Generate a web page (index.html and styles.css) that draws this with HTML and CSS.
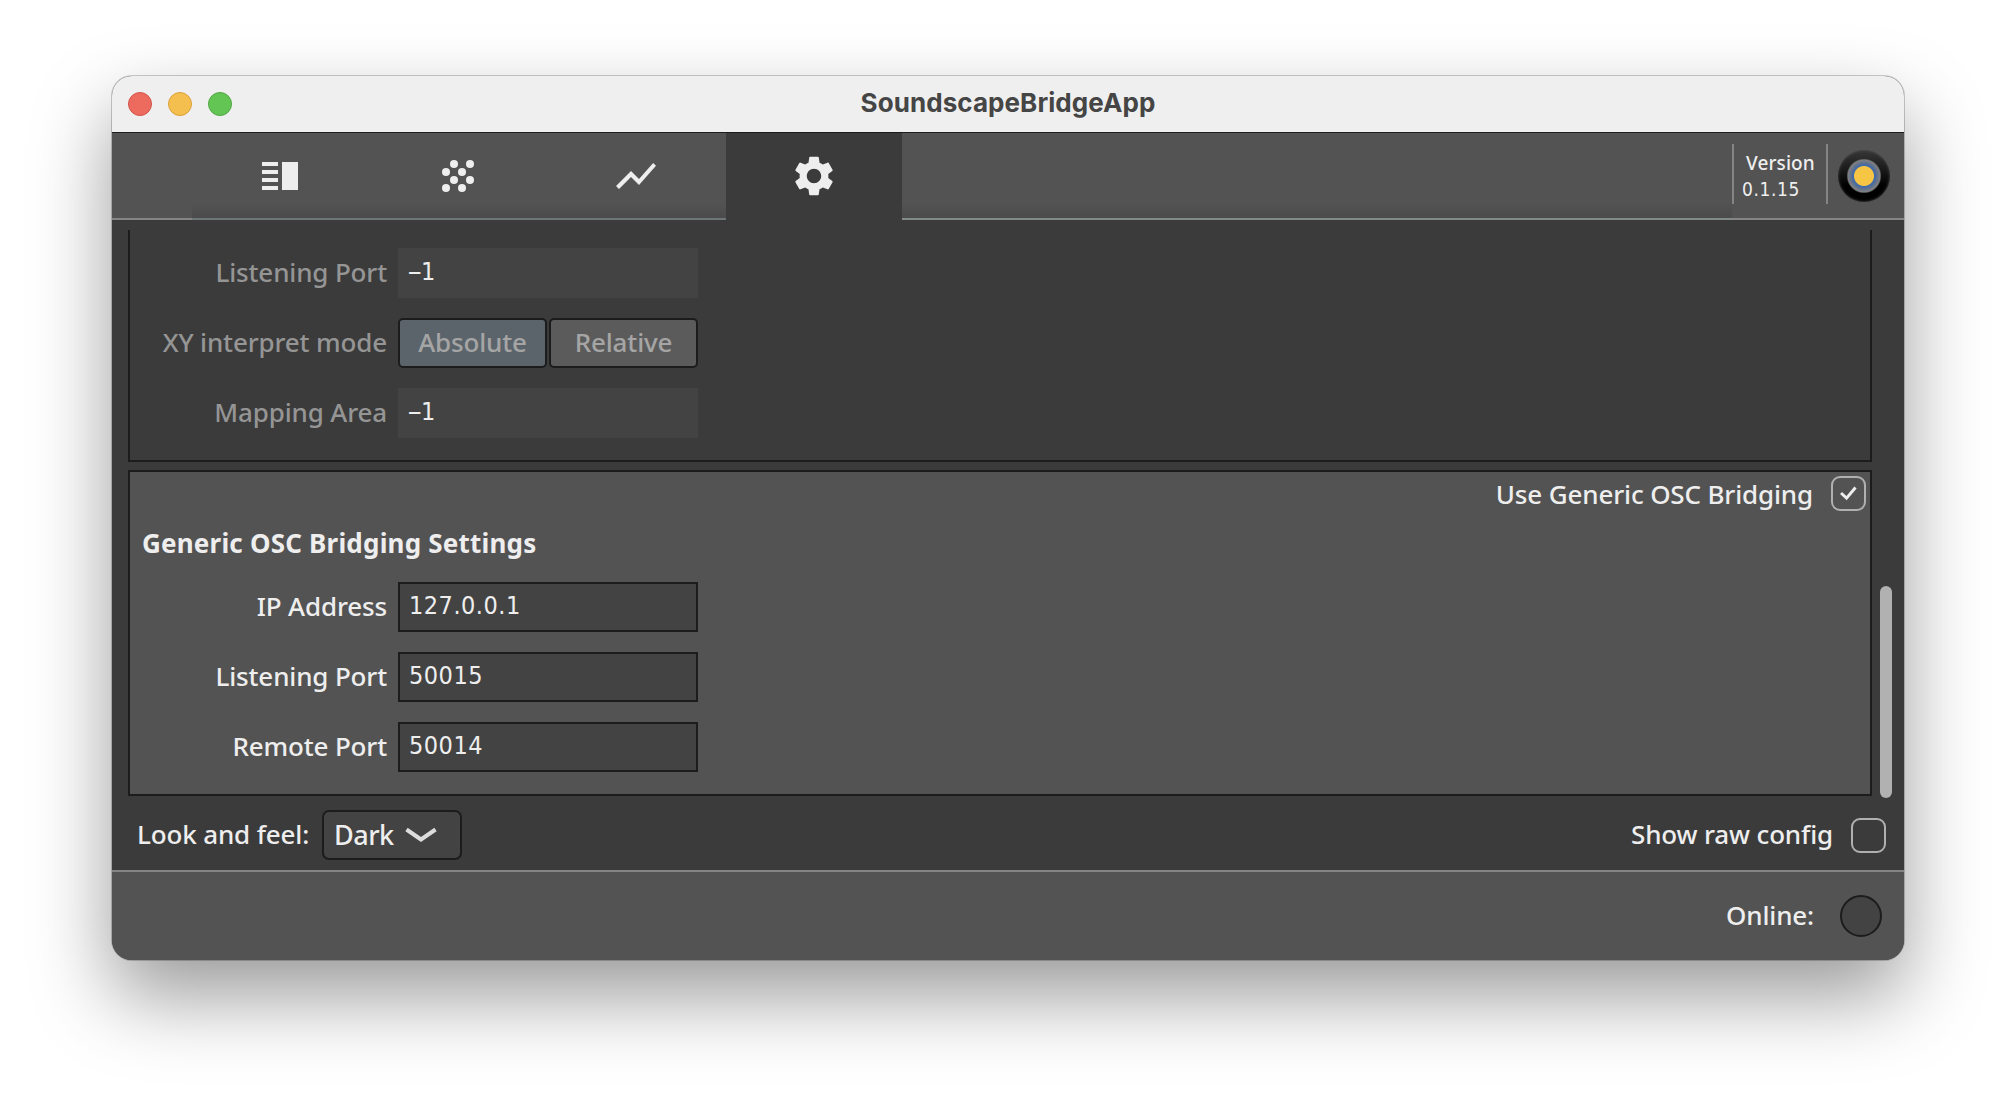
FILE: index.html
```html
<!DOCTYPE html>
<html lang="en">
<head>
<meta charset="utf-8">
<title>SoundscapeBridgeApp</title>
<link rel="stylesheet" href="styles.css">
</head>
<body>
<div class="window">
  <header class="titlebar">
    <div class="lights"><i class="light red"></i><i class="light amber"></i><i class="light green"></i></div>
    <h1 class="title">SoundscapeBridgeApp</h1>
  </header>

  <nav class="toolbar">
    <div class="lead"></div>
    <div class="tab">
      <svg class="icon" viewBox="0 0 48 48"><path d="M6 10h16v4H6zM6 18h16v4H6zM6 26h16v4H6zM6 34h16v4H6zM26 10h16v28H26z"/></svg>
    </div>
    <div class="tab">
      <svg class="icon" viewBox="0 0 48 48"><g><circle cx="20" cy="12" r="4"/><circle cx="36" cy="12" r="4"/><circle cx="12" cy="20" r="4"/><circle cx="28" cy="20" r="4"/><circle cx="20" cy="28" r="4"/><circle cx="36" cy="28" r="4"/><circle cx="12" cy="36" r="4"/><circle cx="28" cy="36" r="4"/></g></svg>
    </div>
    <div class="tab">
      <svg class="icon" viewBox="0 0 24 24"><path d="M3.5 18.49l6-6.01 4 4L22 6.92l-1.41-1.41-7.09 7.97-4-4L2 16.99z"/></svg>
    </div>
    <div class="tab active">
      <svg class="icon" viewBox="0 0 24 24"><path d="M19.14 12.94c.04-.3.06-.61.06-.94 0-.32-.02-.64-.07-.94l2.03-1.58c.18-.14.23-.41.12-.61l-1.92-3.32c-.12-.22-.37-.29-.59-.22l-2.39.96c-.5-.38-1.03-.7-1.62-.94l-.36-2.54c-.04-.24-.24-.41-.48-.41h-3.84c-.24 0-.43.17-.47.41l-.36 2.54c-.59.24-1.13.57-1.62.94l-2.39-.96c-.22-.08-.47 0-.59.22L2.74 8.87c-.12.21-.08.47.12.61l2.03 1.58c-.05.3-.09.63-.09.94s.02.64.07.94l-2.03 1.58c-.18.14-.23.41-.12.61l1.92 3.32c.12.22.37.29.59.22l2.39-.96c.5.38 1.03.7 1.62.94l.36 2.54c.05.24.24.41.48.41h3.84c.24 0 .44-.17.47-.41l.36-2.54c.59-.24 1.13-.56 1.62-.94l2.39.96c.22.08.47 0 .59-.22l1.92-3.32c.12-.22.07-.47-.12-.61l-2.01-1.58zM12 15.6c-1.98 0-3.6-1.62-3.6-3.6s1.62-3.6 3.6-3.6 3.6 1.62 3.6 3.6-1.62 3.6-3.6 3.6z"/></svg>
    </div>
    <div class="filler"></div>
    <div class="about">
      <div class="version"><span class="version-name">Version</span><span class="version-number">0.1.15</span></div>
      <div class="logo"></div>
    </div>
  </nav>

  <main class="content">
    <div class="viewport">
      <div class="sections">
        <section class="panel disabled">
          <div class="row"><label class="label">Listening Port</label><div class="field"><span class="dash">-</span>1</div></div>
          <div class="row"><label class="label">XY interpret mode</label><div class="toggle"><span class="option selected">Absolute</span><span class="option">Relative</span></div></div>
          <div class="row"><label class="label">Mapping Area</label><div class="field"><span class="dash">-</span>1</div></div>
        </section>
        <section class="panel enabled">
          <div class="use"><span class="use-text">Use Generic OSC Bridging</span><span class="check"><svg class="tick" viewBox="0 0 36 36"><path d="M10.3 17.5l5.7 5.3 9.2-11"/></svg></span></div>
          <h2 class="heading">Generic OSC Bridging Settings</h2>
          <div class="rows">
            <div class="row"><label class="label">IP Address</label><div class="field">127.0.0.1</div></div>
            <div class="row"><label class="label">Listening Port</label><div class="field">50015</div></div>
            <div class="row"><label class="label">Remote Port</label><div class="field">50014</div></div>
          </div>
        </section>
      </div>
      <div class="track"><div class="thumb"></div></div>
    </div>
    <div class="options">
      <span class="look">Look and feel:</span>
      <div class="select"><span class="select-text">Dark</span><svg class="chevron" viewBox="0 0 32 16"><path d="M1.5 2.5L16 12.5L30.5 2.5"/></svg></div>
      <span class="raw">Show raw config</span>
      <span class="check"></span>
    </div>
  </main>

  <footer class="status"><span class="online">Online:</span><span class="lamp"></span></footer>
</div>
</body>
</html>
```
FILE: styles.css
```css
* { box-sizing: border-box; }
body {
  margin: 0;
  height: 1108px;
  padding: 76px 112px;
  background: #fff;
  color: #eee;
  font: 500 26px/36px "Noto Sans", sans-serif;
  letter-spacing: -.15px;
  overflow: hidden;
  white-space: nowrap;
}
.window {
  width: 1792px;
  height: 884px;
  display: flex;
  flex-direction: column;
  overflow: hidden;
  border-radius: 20px;
  background: #3b3b3b;
  box-shadow: 0 0 0 1px rgba(0,0,0,.2), 0 36px 80px rgba(0,0,0,.4);
}
.titlebar {
  height: 56px;
  flex: none;
  display: grid;
  grid-template-columns: 1fr auto 1fr;
  align-items: center;
  padding: 0 16px;
  background: #efefef;
}
.lights { display: flex; gap: 16px; }
.light { width: 24px; height: 24px; border-radius: 50%; border: 1px solid; }
.red { background: #ec6a5e; border-color: #d35349; }
.amber { background: #f5bf4f; border-color: #d9a03c; }
.green { background: #62c554; border-color: #50a73f; }
.title { margin: 0 0 3px; color: #454545; font: 700 26px/36px Inter, sans-serif; letter-spacing: .07px; }

.toolbar {
  height: 88px;
  flex: none;
  display: flex;
  background: #535353;
  border-top: 1px solid #1c1c1c;
}
.lead { width: 80px; border-bottom: 2px solid #858585; }
.tab {
  width: 178px;
  display: flex;
  align-items: center;
  padding-left: 64px;
  background: linear-gradient(#535353 82%, #4b4b4b);
  border-bottom: 2px solid #6d7577;
}
.tab.active { width: 176px; background: #3b3b3b; border-color: #3b3b3b; }
.icon { width: 48px; height: 48px; fill: #eee; margin-top: 1px; }
.filler { flex: 1; background: linear-gradient(#535353 82%, #4b4b4b); border-bottom: 2px solid #818989; }
.about { width: 172px; display: flex; border-bottom: 2px solid #858585; padding-top: 11px; }
.version {
  width: 96px;
  height: 60px;
  display: flex;
  flex-direction: column;
  padding: 6px 0 0 8px;
  border: solid #858585;
  border-width: 0 2px;
  font-size: 19px;
  line-height: 26px;
}
.version-name { padding-left: 4px; letter-spacing: .1px; }
.version-number { font-family: "DejaVu Sans Condensed", "DejaVu Sans", sans-serif; font-stretch: condensed; letter-spacing: .6px; }
.logo {
  width: 52px;
  height: 52px;
  margin: 6px 0 0 10px;
  border-radius: 50%;
  background:
    radial-gradient(circle, #f6c544 9.5px, #3c68ad 10.5px, #5d718f 13px, #808080 16px, transparent 17.5px),
    linear-gradient(#383838, #000 70%);
  box-shadow: inset 0 0 3px #555;
}

.content { flex: 1; display: flex; flex-direction: column; padding: 10px 12px 0 16px; }
.viewport { height: 568px; display: flex; justify-content: space-between; }
.sections { width: 1744px; display: flex; flex-direction: column; gap: 8px; }
.panel { border: 2px solid #1c1c1c; }
.disabled {
  height: 232px;
  border-top: 0;
  padding-top: 18px;
  display: flex;
  flex-direction: column;
  gap: 20px;
}
.enabled { height: 326px; background: #535353; }
.row { display: flex; height: 50px; }
.label { width: 257px; margin-right: 11px; text-align: right; line-height: 48px; }
.disabled .label { color: #959595; }
.field {
  width: 300px;
  border: 2px solid #1c1c1c;
  background: #434343;
  padding-left: 9px;
  font: 25px/44px "DejaVu Sans Condensed", "DejaVu Sans", sans-serif;
  font-stretch: condensed;
  letter-spacing: .5px;
}
.disabled .field { border-color: #434343; padding-left: 7px; }
.dash { display: inline-block; width: 14px; transform: scaleX(1.9); transform-origin: left; }
.toggle { width: 300px; display: flex; gap: 2px; }
.option {
  flex: 1;
  border: 2px solid #1c1c1c;
  border-radius: 5px;
  background: #5b5b5b;
  color: #a5a5a5;
  text-align: center;
  line-height: 44px;
}
.selected { background: #5b646b; }
.use { display: flex; justify-content: flex-end; padding: 4px 4px 0 0; height: 40px; }
.use-text { margin-right: 18px; line-height: 37px; }
.check { width: 35px; height: 35px; border: 2px solid #b0b0b0; border-radius: 9px; flex: none; }
.tick { display: block; width: 35px; height: 35px; margin: -2px; fill: none; stroke: #eee; stroke-width: 3; }
.heading { margin: 10px 0 0 12px; height: 60px; font-size: 26px; line-height: 42px; font-weight: 700; letter-spacing: .2px; }
.rows { display: flex; flex-direction: column; gap: 20px; }
.track { display: flex; flex-direction: column; justify-content: flex-end; }
.thumb { width: 12px; height: 212px; border-radius: 6px; background: #b1b1b1; }
.options { display: flex; align-items: center; height: 72px; padding: 2px 6px 0 9px; }
.look { width: 185px; margin-bottom: 2px; }
.select {
  width: 140px;
  height: 50px;
  display: flex;
  align-items: center;
  border: 2px solid #1c1c1c;
  border-radius: 7px;
  background: #434343;
  padding-left: 10px;
  gap: 11px;
  font-size: 27px;
}
.select-text { letter-spacing: -.5px; }
.chevron { width: 32px; height: 16px; fill: none; stroke: #dcdcdc; stroke-width: 4; }
.raw { margin: 0 18px 2px auto; }
.status {
  height: 90px;
  flex: none;
  display: flex;
  justify-content: flex-end;
  align-items: center;
  padding-right: 22px;
  gap: 26px;
  background: #535353;
  border-top: 2px solid #858585;
}
.online { margin-bottom: 3px; }
.lamp { width: 42px; height: 42px; border: 2px solid #1c1c1c; border-radius: 50%; background: #434343; }
```
